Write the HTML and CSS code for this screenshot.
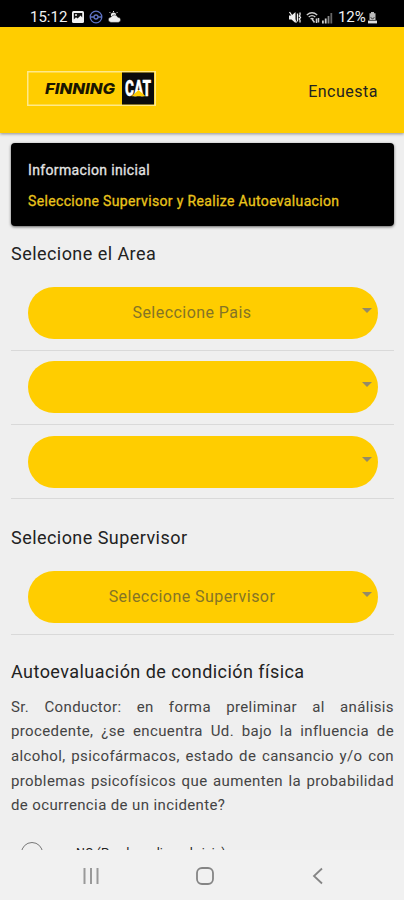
FILE: index.html
```html
<!DOCTYPE html>
<html lang="es">
<head>
    <meta charset="UTF-8">
    <meta name="viewport" content="width=device-width, initial-scale=1">
    <title>Encuesta</title>
    <link rel="stylesheet" href="styles.css">
</head>

<body>
    <div class="status-bar">
        <div class="status-left">
            <span class="clock">15:12</span>
            <svg class="icon-image" width="12" height="12" viewBox="0 0 12 12">
                <rect width="12" height="12" rx="1.5" fill="#f2f2f2"/>
                <path d="M1.8 8.6 L4 6.2 L5.6 7.6 L8.6 4.6 L10.2 6.4 V2 H1.8 Z" fill="#111"/>
                <circle cx="4" cy="3.9" r="1" fill="#f2f2f2"/>
            </svg>
            <svg class="icon-ball" width="14" height="14" viewBox="0 0 14 14" fill="none" stroke="#5f73c4" stroke-width="1.3">
                <circle cx="7" cy="7" r="5.8"/>
                <circle cx="7" cy="7" r="2"/>
                <path d="M1.2 7 H5 M9 7 H12.8"/>
            </svg>
            <svg class="icon-weather" width="13" height="12" viewBox="0 0 13 12" fill="#eee">
                <circle cx="5.5" cy="4" r="2.6"/>
                <path d="M5.5 0 V1 M1.6 1.2 L2.6 2.2 M9.4 1.2 L8.4 2.2" stroke="#eee"/>
                <path d="M3 11.4 A2.7 2.7 0 0 1 3.2 6 A3.6 3.6 0 0 1 9.8 6.2 A2.6 2.6 0 0 1 10.2 11.4 Z" stroke="#000" stroke-width=".5"/>
            </svg>
        </div>
        <div class="status-right">
            <svg width="14" height="13" viewBox="0 0 14 13" fill="#eee">
                <path d="M1 4.5 H3.5 L7.5 1 V12 L3.5 8.6 H1 Z"/>
                <path d="M1.5 1 L8.5 11.5 M9.5 2.5 V10.5 M12 1.5 V4 L11.3 5 L12.5 6.5 L11.3 8 L12 9 V11.5" fill="none" stroke="#eee" stroke-width="1.3"/>
            </svg>
            <svg class="icon-wifi" width="15" height="13" viewBox="0 0 15 13" fill="none" stroke="#ccc" stroke-width="1.3">
                <path d="M.8 4 Q6 -.6 11.2 4 M2.7 6 Q6 3.2 9.3 6 M4.5 8 Q6 6.8 7.5 8"/>
                <path d="M6 8 L8.5 11.5 M10.5 7.5 V12 M12.5 7 V11.5" stroke-width="1.5"/>
            </svg>
            <svg class="icon-signal" width="11" height="12" viewBox="0 0 11 12" fill="#ccc">
                <rect x="0" y="8.5" width="1.8" height="3"/>
                <rect x="2.8" y="6.5" width="1.8" height="5"/>
                <rect x="5.6" y="4" width="1.8" height="7.5" fill="#888"/>
                <rect x="8.4" y="1" width="1.8" height="10.5" fill="#666"/>
            </svg>
            <span class="battery">12%</span>
            <svg width="9" height="12" viewBox="0 0 9 12">
                <path d="M3 0 H6 V1.2 H7.5 V8 H1.5 V1.2 H3 Z" fill="#bbb"/>
                <path d="M2.7 5.2 L4.5 7.2 L6.3 5.2" stroke="#333" fill="none"/>
                <rect x="0" y="8.6" width="9" height="2.8" fill="#ddd"/>
            </svg>
        </div>
    </div>

    <header class="header">
        <svg class="logo" width="129" height="35" viewBox="0 0 129 35">
            <rect x=".75" y=".75" width="127.5" height="33.5" fill="none" stroke="#ffe98a" stroke-width="1.5"/>
            <rect x="95" y="1.5" width="32" height="32" fill="#0b0b0b"/>
            <text class="logo-finning" x="18" y="23" textLength="70" lengthAdjust="spacingAndGlyphs">FINNING</text>
            <text class="logo-cat" x="98" y="25" textLength="26" lengthAdjust="spacingAndGlyphs">CAT</text>
            <path d="M104.5 25.3 L111.5 19 L118.5 25.3 Z" fill="#ffcd00"/>
        </svg>
        <span class="header-title">Encuesta</span>
    </header>

    <main class="content">
        <div class="info-card">
            <p class="info-title">Informacion inicial</p>
            <p class="info-text">Seleccione Supervisor y Realize Autoevaluacion</p>
        </div>

        <h2 class="heading-area">Selecione el Area</h2>
        <div class="field">
            <div class="select"><span class="select-pais">Seleccione Pais</span></div>
        </div>
        <div class="field">
            <div class="select"></div>
        </div>
        <div class="field">
            <div class="select"></div>
        </div>

        <h2 class="heading-supervisor">Selecione Supervisor</h2>
        <div class="field">
            <div class="select"><span class="select-supervisor">Seleccione Supervisor</span></div>
        </div>

        <h2 class="heading-auto">Autoevaluación de condición física</h2>
        <p class="question">Sr. Conductor: en forma preliminar al análisis procedente, ¿se encuentra Ud. bajo la influencia de alcohol, psicofármacos, estado de cansancio y/o con problemas psicofísicos que aumenten la probabilidad de ocurrencia de un incidente?</p>

        <div class="option">
            <span class="radio"></span>
            <span class="option-label">NO (Puede realizar el viaje)</span>
        </div>
    </main>

    <nav class="nav-bar">
        <svg width="18" height="18" viewBox="0 0 18 18" stroke="#999" stroke-width="2">
            <path d="M2.5 1 V17 M9 1 V17 M15.5 1 V17"/>
        </svg>
        <svg width="18" height="18" viewBox="0 0 18 18" fill="none" stroke="#858585" stroke-width="1.8">
            <rect x="1" y="1" width="16" height="16" rx="5"/>
        </svg>
        <svg width="18" height="18" viewBox="0 0 18 18" fill="none" stroke="#858585" stroke-width="1.8">
            <path d="M13 1.5 L5 9 L13 16.5"/>
        </svg>
    </nav>
</body>
</html>
```
FILE: styles.css
```css
* {
    box-sizing: border-box;
}

body {
    margin: 0;
    height: 900px;
    display: flex;
    flex-direction: column;
    overflow: hidden;
    font-family: Roboto, "Liberation Sans", sans-serif;
    color: #222;
    background-color: #efefef;
}

h2, p {
    margin: 0;
}

.status-bar {
    height: 27px;
    flex: none;
    display: flex;
    justify-content: space-between;
    padding: 8px 27px 0 30px;
    background-color: #000;
    color: #f2f2f2;
    font-size: 15px;
    line-height: 19px;
}

.status-left, .status-right {
    display: flex;
    align-items: center;
    height: 19px;
}

.clock {
    width: 37px;
}

.icon-image, .icon-ball, .icon-weather {
    margin-left: 5px;
    margin-bottom: 1px;
}

.icon-wifi {
    margin-left: 4px;
}

.icon-signal {
    margin-left: 1px;
}

.battery {
    margin-left: 5px;
    width: 30px;
    letter-spacing: -0.1px;
}

.header {
    height: 106px;
    flex: none;
    display: flex;
    align-items: flex-start;
    justify-content: space-between;
    padding: 44px 26px 0 27px;
    background-color: #ffcd00;
    box-shadow: 0 1px 3px rgba(0, 0, 0, 0.4);
}

.logo-finning {
    font-family: Inter, Roboto, sans-serif;
    font-size: 15px;
    font-weight: 800;
    font-style: italic;
    fill: #1a1600;
}

.logo-cat {
    font-family: Roboto, sans-serif;
    font-size: 22px;
    font-weight: 900;
    fill: #fff;
    stroke: #fff;
    stroke-width: 0.3px;
}

.header-title {
    margin-top: 11px;
    font-size: 16px;
    line-height: 20px;
    letter-spacing: 0.5px;
}

.content {
    flex: 1;
    min-height: 0;
    overflow: hidden;
    padding: 10px 10px 0 11px;
}

.info-card {
    height: 83px;
    padding: 17px 17px 0;
    background-color: #000;
    border-radius: 4px;
    box-shadow: 0 1px 3px rgba(0, 0, 0, 0.6);
    font-size: 14px;
    line-height: 20px;
    letter-spacing: 0.35px;
    -webkit-text-stroke: 0.3px;
}

.info-title {
    color: #e4e4e4;
}

.info-text {
    margin-top: 11px;
    color: #e9c41c;
}

h2 {
    font-size: 18px;
    font-weight: 400;
    line-height: 24px;
    letter-spacing: 0.45px;
}

.heading-area {
    margin: 16px 0 21px;
}

.heading-supervisor {
    margin: 27px 0 21px;
}

.heading-auto {
    margin: 25px 0 11px;
}

.field {
    height: 63.5px;
    margin-bottom: 10.8px;
    padding: 0 16px 0 17px;
    border-bottom: 1px solid #d9d9d9;
}

.select {
    position: relative;
    height: 52px;
    padding-right: 22px;
    border-radius: 26px;
    background-color: #ffcd00;
    color: #857426;
    font-size: 16px;
    line-height: 52px;
    letter-spacing: 0.45px;
    text-align: center;
}

/* dropdown arrow */
.select::after {
    content: "";
    position: absolute;
    right: 6px;
    top: 21px;
    border: 5px solid transparent;
    border-top-color: #938a68;
    border-bottom: 0;
}

.question {
    font-size: 15px;
    line-height: 24.7px;
    letter-spacing: 0.38px;
    text-align: justify;
    color: #444;
}

.option {
    display: flex;
    align-items: flex-start;
    padding: 24px 0 0 10px;
}

.radio {
    width: 22px;
    height: 22px;
    border: 1.5px solid #777;
    border-radius: 50%;
}

.option-label {
    margin: 2px 0 0 33px;
    font-size: 12.5px;
    line-height: 18px;
}

.nav-bar {
    height: 50px;
    flex: none;
    display: flex;
    justify-content: space-between;
    padding: 17px 77px 0 82px;
    background-color: #f1f1f1;
}
```
